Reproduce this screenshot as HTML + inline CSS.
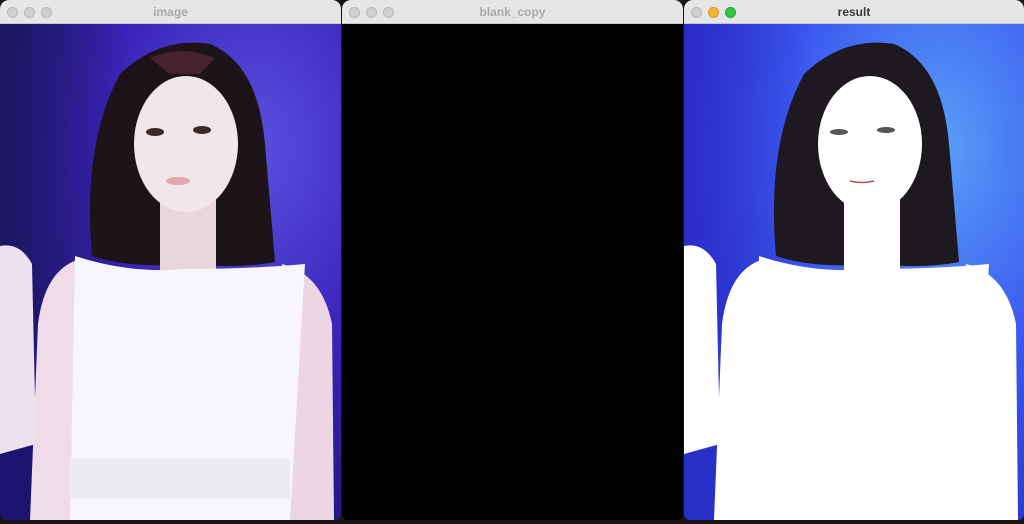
<!DOCTYPE html>
<html><head><style>
body{margin:0;width:1024px;height:524px;background:#1a1416;overflow:hidden;position:relative;font-family:"Liberation Sans",sans-serif}
.win{position:absolute;top:0;height:520px;border-radius:9px 9px 6px 6px;overflow:hidden;background:#000}
.tb{height:24px;background:#e6e6e6;border-bottom:1px solid #c8c8c8;position:relative;box-sizing:border-box;text-align:center;font-size:12px;font-weight:bold;line-height:24px;color:#a8a8a8}
.d{position:absolute;top:7px;width:11px;height:11px;border-radius:50%;background:#cfcfcf;border:0.5px solid #b8b8b8;box-sizing:border-box}
svg{display:block}
</style></head><body>
<div class="win" style="left:0;width:341px">
<div class="tb"><span class="d" style="left:7px"></span><span class="d" style="left:24px"></span><span class="d" style="left:41px"></span>image</div>
<svg width="341" height="496" viewBox="0 0 341 496">
<defs><radialGradient id="bg1" cx="0.75" cy="0.25" r="0.9"><stop offset="0" stop-color="#5a50e0"/><stop offset="0.5" stop-color="#3a22b8"/><stop offset="1" stop-color="#1c1470"/></radialGradient>
<linearGradient id="dk" x1="0" x2="1"><stop offset="0" stop-color="#1a1450" stop-opacity="0.7"/><stop offset="1" stop-color="#1a1450" stop-opacity="0"/></linearGradient></defs>
<rect width="341" height="496" fill="url(#bg1)"/>
<rect width="130" height="320" fill="url(#dk)"/>
<path d="M92 232 Q82 120 120 50 Q160 12 210 20 Q258 40 265 120 L275 238 Q240 245 190 240 Q130 245 92 232Z" fill="#1c1418"/>
<path d="M150 34 Q180 20 215 34 L200 50 L170 50Z" fill="#5a2838" opacity="0.7"/>
<rect x="160" y="170" width="56" height="80" fill="#e8d6dc"/>
<ellipse cx="186" cy="120" rx="52" ry="68" fill="#f2e6ea"/>
<ellipse cx="155" cy="108" rx="9" ry="4" fill="#3a2a2a"/><ellipse cx="202" cy="106" rx="9" ry="4" fill="#3a2a2a"/>
<ellipse cx="178" cy="157" rx="12" ry="4" fill="#e0a8b0"/>
<path d="M38 300 Q45 245 80 235 L78 496 L30 496Z" fill="#f0dce8"/>
<path d="M282 240 Q322 250 332 300 L334 496 L288 496Z" fill="#ecd6e4"/>
<path d="M75 232 Q130 250 185 245 Q250 245 305 240 L290 496 L70 496Z" fill="#f8f6fa"/>
<path d="M0 222 Q20 218 32 240 L36 420 L0 430Z" fill="#ece2ee"/>
<rect x="70" y="435" width="220" height="40" fill="#ecebf2"/>
</svg></div>
<div class="win" style="left:342px;width:341px">
<div class="tb"><span class="d" style="left:7px"></span><span class="d" style="left:24px"></span><span class="d" style="left:41px"></span>blank_copy</div>
</div>
<div class="win" style="left:684px;width:340px">
<div class="tb" style="color:#3a3a3a"><span class="d" style="left:7px"></span><span class="d" style="left:24px;background:#f5b52e;border-color:#d9992a"></span><span class="d" style="left:41px;background:#2ac840;border-color:#1fa832"></span>result</div>
<svg width="340" height="496" viewBox="0 0 340 496">
<defs><radialGradient id="bg2" cx="0.75" cy="0.25" r="0.9"><stop offset="0" stop-color="#58a0f8"/><stop offset="0.5" stop-color="#3b58f0"/><stop offset="1" stop-color="#2830c8"/></radialGradient>
<linearGradient id="dk2" x1="0" x2="1"><stop offset="0" stop-color="#2a20c0" stop-opacity="0.6"/><stop offset="1" stop-color="#2a20c0" stop-opacity="0"/></linearGradient></defs>
<rect width="340" height="496" fill="url(#bg2)"/>
<rect width="130" height="320" fill="url(#dk2)"/>
<path d="M92 232 Q82 120 120 50 Q160 12 210 20 Q258 40 265 120 L275 238 Q240 245 190 240 Q130 245 92 232Z" fill="#1e1820"/>
<rect x="160" y="170" width="56" height="80" fill="#fff"/>
<ellipse cx="186" cy="120" rx="52" ry="68" fill="#fff"/>
<ellipse cx="155" cy="108" rx="9" ry="3" fill="#555"/><ellipse cx="202" cy="106" rx="9" ry="3" fill="#555"/>
<path d="M166 157 Q178 160 190 157" stroke="#b05060" stroke-width="1.5" fill="none"/>
<path d="M38 300 Q45 245 80 235 L78 496 L30 496Z" fill="#fff"/>
<path d="M282 240 Q322 250 332 300 L334 496 L288 496Z" fill="#fff"/>
<path d="M75 232 Q130 250 185 245 Q250 245 305 240 L290 496 L70 496Z" fill="#fff"/>
<path d="M0 222 Q20 218 32 240 L36 420 L0 430Z" fill="#fff"/>
</svg></div>
</body></html>
